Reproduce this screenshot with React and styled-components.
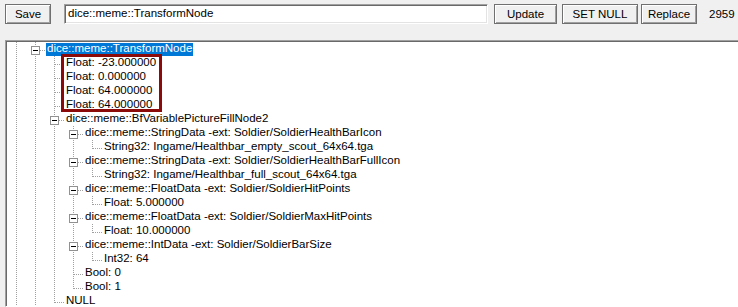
import React from 'react'
import styled, { createGlobalStyle } from 'styled-components'

const GlobalStyle = createGlobalStyle`
	html, body {
		margin: 0;
		padding: 0;
		background: #f0f0f0;
		overflow: hidden;
	}
	body {
		font-family: "Liberation Sans", Arial, sans-serif;
		font-size: 11.5px;
		color: #000;
	}
`

const DOTS_V = 'repeating-linear-gradient(to bottom, #a0a0a0 0 1px, transparent 1px 2px)'
const DOTS_H = 'repeating-linear-gradient(to right, #a0a0a0 0 1px, transparent 1px 2px)'

const Window = styled.div`
	width: 738px;
	height: 307px;
	display: flex;
	flex-direction: column;
	padding: 4px 0 0 5px;
	box-sizing: border-box;
`

const Toolbar = styled.div`
	display: flex;
	align-items: center;
	height: 20px;
`

const Button = styled.button`
	box-sizing: border-box;
	width: ${p => p.$w}px;
	height: 20px;
	margin-right: ${p => p.$gap || 0}px;
	padding: 0;
	font-family: inherit;
	font-size: 11.5px;
	color: #000;
	background: #f0f0f0;
	border: 1px solid #707070;
	box-shadow: inset 1px 1px #ffffff, inset -1px -1px #a0a0a0;
`

const TextInput = styled.div`
	box-sizing: border-box;
	width: 424px;
	height: 20px;
	margin: 0 6px 0 13px;
	padding-left: 3px;
	line-height: 17px;
	background: #fff;
	border: 1px solid;
	border-color: #a0a0a0 #ffffff #ffffff #a0a0a0;
	box-shadow: inset 1px 1px #696969, inset -1px -1px #e3e3e3;
	white-space: nowrap;
`

const Count = styled.span`
	margin-left: 12px;
`

const Panel = styled.div`
	box-sizing: border-box;
	margin-top: 16px;
	margin-right: -4px;
	height: 280px;
	background: #fff;
	border: 1px solid;
	border-color: #a0a0a0 #ffffff #ffffff #a0a0a0;
	box-shadow: inset 1px 1px #696969;
	padding: 1px 0 0 1px;
	overflow: hidden;
`

const Tree = styled.div`
	position: relative;
	display: flex;
	flex-direction: column;
`

const Row = styled.div`
	display: flex;
	height: 14px;
	white-space: nowrap;
`

const Cell = styled.div`
	position: relative;
	flex: none;
	width: 19px;
	height: 14px;

	&::before {
		content: '';
		display: ${p => (p.$line === 'none' ? 'none' : 'block')};
		position: absolute;
		left: 9px;
		top: 0;
		width: 1px;
		height: ${p => (p.$line === 'half' ? '9px' : '14px')};
		background: ${DOTS_V};
	}

	&::after {
		content: '';
		display: ${p => (p.$branch ? 'block' : 'none')};
		position: absolute;
		left: 10px;
		top: 8px;
		width: 9px;
		height: 1px;
		background: ${DOTS_H};
	}
`

const ExpandBox = styled.span`
	position: absolute;
	z-index: 1;
	left: 5px;
	top: 4px;
	width: 9px;
	height: 9px;
	box-sizing: border-box;
	background: #fff;
	border: 1px solid #919191;

	&::after {
		content: '';
		position: absolute;
		left: 1px;
		top: 3px;
		width: 5px;
		height: 1px;
		background: #000;
	}
`

const Label = styled.span`
	margin: 1px 0 0 1px;
	padding: 0 1px;
	height: 13px;
	line-height: 10px;
	background: ${p => (p.$selected ? '#0078d7' : 'transparent')};
	color: ${p => (p.$selected ? '#fff' : '#000')};
`

const Highlight = styled.div`
	position: absolute;
	left: 54px;
	top: 12px;
	width: 101px;
	height: 58px;
	box-sizing: border-box;
	border: 3px solid #8b0a0a;
	pointer-events: none;
`

const leaf = label => ({ label })

const data = [
	{
		label: 'dice::meme::TransformNode',
		selected: true,
		more: true,
		children: [
			leaf('Float: -23.000000'),
			leaf('Float: 0.000000'),
			leaf('Float: 64.000000'),
			leaf('Float: 64.000000'),
			{
				label: 'dice::meme::BfVariablePictureFillNode2',
				children: [
					{ label: 'dice::meme::StringData -ext: Soldier/SoldierHealthBarIcon', children: [leaf('String32: Ingame/Healthbar_empty_scout_64x64.tga')] },
					{ label: 'dice::meme::StringData -ext: Soldier/SoldierHealthBarFullIcon', children: [leaf('String32: Ingame/Healthbar_full_scout_64x64.tga')] },
					{ label: 'dice::meme::FloatData -ext: Soldier/SoldierHitPoints', children: [leaf('Float: 5.000000')] },
					{ label: 'dice::meme::FloatData -ext: Soldier/SoldierMaxHitPoints', children: [leaf('Float: 10.000000')] },
					{ label: 'dice::meme::IntData -ext: Soldier/SoldierBarSize', children: [leaf('Int32: 64')] },
					leaf('Bool: 0'),
					leaf('Bool: 1'),
				],
			},
			leaf('NULL'),
		],
	},
]

// flatten the tree into rows, remembering which ancestor lines keep going
const flatten = (nodes, guides, out) => {
	nodes.forEach((node, i) => {
		const last = i === nodes.length - 1 && !node.more
		out.push({ ...node, guides, last })
		if (node.children) flatten(node.children, [...guides, !last], out)
	})
	return out
}

const rows = flatten(data, [true], [])

const App = () => {
	return (
		<>
			<GlobalStyle />
			<Window>
				<Toolbar>
					<Button $w={46}>Save</Button>
					<TextInput>dice::meme::TransformNode</TextInput>
					<Button $w={63} $gap={5}>Update</Button>
					<Button $w={76} $gap={3}>SET NULL</Button>
					<Button $w={56}>Replace</Button>
					<Count>2959</Count>
				</Toolbar>
				<Panel>
					<Tree>
						{rows.map((row, i) => (
							<Row key={i}>
								{row.guides.map((on, j) => (
									<Cell key={j} $line={on ? 'full' : 'none'} />
								))}
								<Cell $line={row.last ? 'half' : 'full'} $branch>
									{row.children && <ExpandBox />}
								</Cell>
								<Label $selected={row.selected}>{row.label}</Label>
							</Row>
						))}
						<Highlight />
					</Tree>
				</Panel>
			</Window>
		</>
	)
}

export default App
